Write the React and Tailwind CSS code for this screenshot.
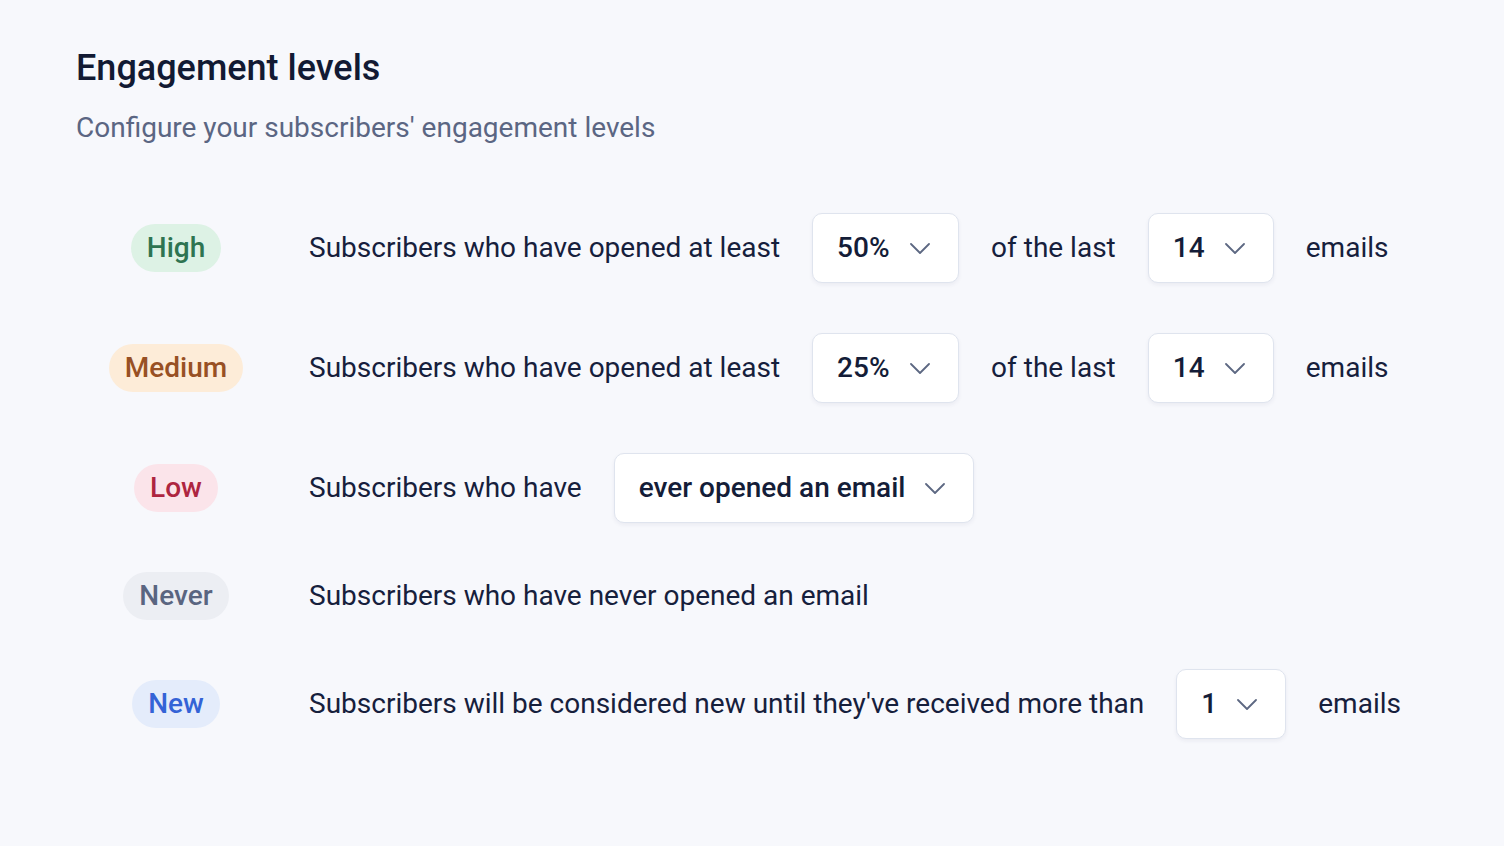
const rows = [
  {
    id: 'high',
    label: 'High',
    badge: 'bg-[#ddf2e5] text-[#2e7451]',
    parts: [
      { text: 'Subscribers who have opened at least' },
      { select: '50%', width: 'w-[147px]' },
      { text: 'of the last' },
      { select: '14', width: 'w-[126px]' },
      { text: 'emails' },
    ],
  },
  {
    id: 'medium',
    label: 'Medium',
    badge: 'bg-[#fdecd8] text-[#985024]',
    parts: [
      { text: 'Subscribers who have opened at least' },
      { select: '25%', width: 'w-[147px]' },
      { text: 'of the last' },
      { select: '14', width: 'w-[126px]' },
      { text: 'emails' },
    ],
  },
  {
    id: 'low',
    label: 'Low',
    badge: 'bg-[#fbe4ea] text-[#ae2540]',
    parts: [
      { text: 'Subscribers who have' },
      { select: 'ever opened an email', width: 'w-[360px]' },
    ],
  },
  {
    id: 'never',
    label: 'Never',
    badge: 'bg-[#eceef3] text-[#5a6580]',
    parts: [{ text: 'Subscribers who have never opened an email' }],
  },
  {
    id: 'new',
    label: 'New',
    badge: 'bg-[#e4ecfb] text-[#3463d6]',
    parts: [
      { text: "Subscribers will be considered new until they've received more than" },
      { select: '1', width: 'w-[110px]' },
      { text: 'emails' },
    ],
  },
];

function Chevron() {
  return (
    <svg width="20" height="11" viewBox="0 0 20 11" fill="none" className="text-[#5d6882]">
      <path d="M1 1l9 9 9-9" stroke="currentColor" strokeWidth="1.8" strokeLinecap="round" strokeLinejoin="round" />
    </svg>
  );
}

function Select({ value, width }) {
  return (
    <button className={`${width} h-[70px] flex items-center justify-between pl-6 pr-7 bg-white border border-[#dfe4ee] rounded-[10px] shadow-[0_2px_4px_rgba(30,41,80,0.06)]`}>
      <span className="font-medium text-[#141d38]">{value}</span>
      <Chevron />
    </button>
  );
}

export default function App() {
  return (
    <div className="min-h-screen bg-[#f7f8fc] px-[76px] pt-[44px] font-['Roboto',sans-serif] text-[#16203c]">
      {/* Header */}
      <h1 className="text-[36px] leading-[48px] font-medium text-[#121a33]">Engagement levels</h1>
      <p className="mt-[18px] text-[28px] leading-[36px] text-[#5b6683]">Configure your subscribers' engagement levels</p>

      {/* Levels */}
      <div className="mt-[67px] flex flex-col text-[28px]">
        {rows.map((row, idx) => (
          <div key={row.id} className={`flex items-center ${idx === 0 ? '' : idx >= 3 ? 'mt-[49px]' : 'mt-[50px]'}`}>
            <div className="w-[200px] flex justify-center">
              <span className={`h-[48px] px-4 flex items-center rounded-full font-medium ${row.badge}`}>{row.label}</span>
            </div>
            <div className="ml-[33px] flex items-center gap-8">
              {row.parts.map((p, i) =>
                p.select ? (
                  <Select key={i} value={p.select} width={p.width} />
                ) : (
                  <span key={i}>{p.text}</span>
                )
              )}
            </div>
          </div>
        ))}
      </div>
    </div>
  );
}
